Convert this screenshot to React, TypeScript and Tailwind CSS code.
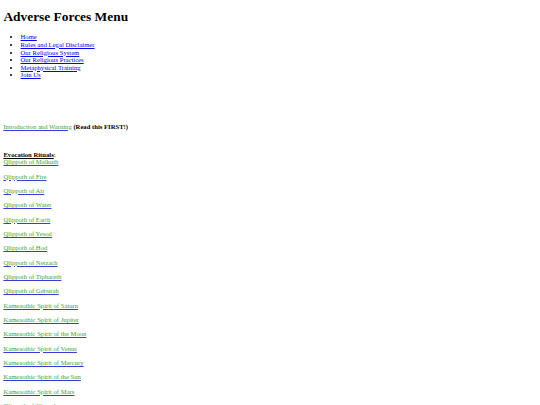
const menu = [
  "Home",
  "Rules and Legal Disclaimer",
  "Our Religious System",
  "Our Religious Practices",
  "Metaphysical Training",
  "Join Us",
];

const rituals = [
  "Qlippoth of Fire",
  "Qlippoth of Air",
  "Qlippoth of Water",
  "Qlippoth of Earth",
  "Qlippoth of Yesod",
  "Qlippoth of Hod",
  "Qlippoth of Netzach",
  "Qlippoth of Tiphareth",
  "Qlippoth of Geburah",
  "Kameaothic Spirit of Saturn",
  "Kameaothic Spirit of Jupiter",
  "Kameaothic Spirit of the Moon",
  "Kameaothic Spirit of Venus",
  "Kameaothic Spirit of Mercury",
  "Kameaothic Spirit of the Sun",
  "Kameaothic Spirit of Mars",
  "Qlippoth of Chesed",
  "Qlippoth of Binah",
];

function GreenLink({ children }: { children: React.ReactNode }) {
  return (
    <a href="#" className="text-[#33a833] underline decoration-[#3b3bd6]">
      {children}
    </a>
  );
}

export default function App() {
  return (
    <div className="bg-white text-black px-[3.4px] pt-[3.4px] font-['Liberation_Serif',_'Times_New_Roman',_serif] text-[6.65px] leading-[7.65px]">
      <h1 className="mt-[5.4px] text-[13.4px] leading-[15.4px] font-bold">Adverse Forces Menu</h1>

      <ul className="mt-[9px] pl-[17.2px] list-disc">
        {menu.map((item) => (
          <li key={item}>
            <a href="#" className="text-[#0000ee] underline">
              {item}
            </a>
          </li>
        ))}
      </ul>

      <p className="mt-[43.4px]">
        <GreenLink>Introduction and Warning</GreenLink> <b>(Read this FIRST!)</b>
      </p>

      <p className="mt-[20.4px]">
        <b className="underline">Evocation Rituals</b>:
        <br />
        <GreenLink>Qlippoth of Malkuth</GreenLink>
      </p>

      {rituals.map((r) => (
        <p key={r} className="mt-[6.7px]">
          <GreenLink>{r}</GreenLink>
        </p>
      ))}
    </div>
  );
}
